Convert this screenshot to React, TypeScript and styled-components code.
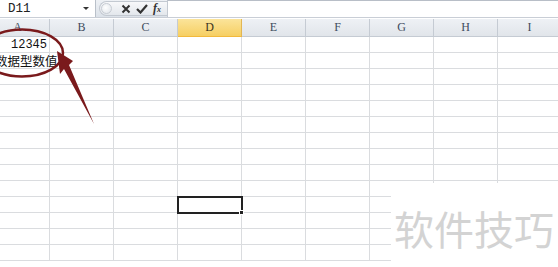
import React from "react";
import styled, { createGlobalStyle } from "styled-components";

const Global = createGlobalStyle`
  html, body { margin: 0; padding: 0; background: #ffffff; overflow: hidden; }
  body { width: 558px; height: 267px; font-family: "Liberation Sans", "Noto Sans CJK SC", sans-serif; }
`;

const Page = styled.div`
  position: relative;
  width: 558px;
  height: 267px;
  overflow: hidden;
  background: #fff;
  display: flex;
  flex-direction: column;
`;

const FormulaBar = styled.div`
  display: flex;
  height: 18px;
  background: #dfe4ea;
  border-bottom: 1px solid #c9ced6;
  box-sizing: border-box;
`;

const NameBox = styled.div`
  width: 96px;
  height: 17px;
  box-sizing: border-box;
  background: #fff;
  border-right: 1px solid #b9c0c9;
  display: flex;
  align-items: center;
  justify-content: space-between;
  padding: 0 4px 0 8px;
  font-family: "Liberation Mono", monospace;
  font-size: 12.5px;
  color: #222;
`;

const Caret = styled.span`
  width: 0;
  height: 0;
  border-left: 3px solid transparent;
  border-right: 3px solid transparent;
  border-top: 3px solid #333;
  margin-right: 2px;
`;

const ButtonArea = styled.div`
  width: 71px;
  display: flex;
  align-items: center;
  padding-left: 3px;
  box-sizing: border-box;
  background: linear-gradient(#eef1f5, #dce2e9);
`;

const Pill = styled.div`
  height: 15px;
  flex: 1;
  display: flex;
  align-items: center;
  gap: 5px;
  border: 1px solid #c3c9d1;
  border-right: none;
  border-radius: 8px 0 0 8px;
  background: linear-gradient(#f7f8fa, #e3e7ec);
  box-sizing: border-box;
  padding-left: 1px;
`;

const Knob = styled.span`
  width: 11px;
  height: 11px;
  border-radius: 50%;
  border: 1px solid #c7ccd3;
  background: radial-gradient(circle at 40% 40%, #ffffff, #dde2e8);
  box-sizing: border-box;
  margin-right: 4px;
`;

const Fx = styled.span`
  font-family: "Liberation Serif", serif;
  font-style: italic;
  font-weight: bold;
  font-size: 12px;
  color: #333;
  & > small { font-size: 8px; }
`;

const FormulaInput = styled.div`
  flex: 1;
  height: 17px;
  background: #fff;
  border-left: 1px solid #c3c9d1;
  border-top: 1px solid #b8bec7;
  box-sizing: border-box;
`;

const Sheet = styled.div`
  margin-left: -14px;
  margin-top: 1px;
  display: grid;
  grid-template-columns: repeat(9, 64px);
  grid-template-rows: 18px;
  grid-auto-rows: 16px;
`;

const ColHead = styled.div<{ $active?: boolean }>`
  box-sizing: border-box;
  border-right: 1px solid ${(p) => (p.$active ? "#e2b654" : "#c5cbd3")};
  border-bottom: 1px solid ${(p) => (p.$active ? "#f2b93c" : "#c5cbd3")};
  background: ${(p) =>
    p.$active ? "linear-gradient(#fbe49a, #f6cf63)" : "linear-gradient(#eef1f5, #e1e5ea)"};
  display: flex;
  align-items: center;
  justify-content: center;
  font-family: "Liberation Serif", serif;
  font-size: 12px;
  color: ${(p) => (p.$active ? "#3c3420" : "#3f4c5e")};
`;

const Cell = styled.div<{ $align?: "left" | "right"; $selected?: boolean }>`
  position: relative;
  box-sizing: border-box;
  border-right: 1px solid #dadcdf;
  border-bottom: 1px solid #dadcdf;
  display: flex;
  align-items: flex-end;
  justify-content: ${(p) => (p.$align === "right" ? "flex-end" : "flex-start")};
  padding: 0 2px 1px 3px;
  white-space: nowrap;
  overflow: visible;
  color: #111;
  ${(p) =>
    p.$selected &&
    `
    outline: 2px solid #222;
    outline-offset: -1px;
    z-index: 2;
  `}
`;

const Num = styled.span`
  font-family: "Liberation Mono", monospace;
  font-size: 12px;
  line-height: 11px;
`;

const CjkText = styled.span`
  font-family: "Noto Sans CJK SC", sans-serif;
  font-size: 12.5px;
  line-height: 13px;
  margin-left: 6px;
  position: relative;
  z-index: 1;
`;

const FillHandle = styled.span`
  position: absolute;
  right: -3px;
  bottom: -3px;
  width: 5px;
  height: 5px;
  background: #222;
  border: 1px solid #fff;
  box-sizing: border-box;
`;

const Annotation = styled.svg`
  position: absolute;
  left: 0;
  top: 0;
  pointer-events: none;
  z-index: 5;
`;

const Watermark = styled.div`
  position: absolute;
  left: 391px;
  top: 183px;
  width: 167px;
  height: 84px;
  background: #fff;
  display: flex;
  align-items: center;
  padding-left: 3px;
  padding-top: 6px;
  box-sizing: border-box;
  font-family: "Noto Sans CJK SC", sans-serif;
  font-size: 40px;
  color: #d3d3d3;
  z-index: 4;
`;

const cols = ["A", "B", "C", "D", "E", "F", "G", "H", "I"];
const ROWS = 14;

export default function App() {
  const rows: React.ReactNode[] = [];
  for (let r = 1; r <= ROWS; r++) {
    cols.forEach((c) => {
      const key = `${c}${r}`;
      if (key === "A1") {
        rows.push(
          <Cell key={key} $align="right">
            <Num>12345</Num>
          </Cell>
        );
      } else if (key === "A2") {
        rows.push(
          <Cell key={key}>
            <CjkText>数据型数值</CjkText>
          </Cell>
        );
      } else if (key === "D11") {
        rows.push(
          <Cell key={key} $selected>
            <FillHandle />
          </Cell>
        );
      } else {
        rows.push(<Cell key={key} />);
      }
    });
  }

  return (
    <Page>
      <Global />
      <FormulaBar>
        <NameBox>
          <span>D11</span>
          <Caret />
        </NameBox>
        <ButtonArea>
          <Pill>
            <Knob />
            <svg width="10" height="10" viewBox="0 0 10 10">
              <path d="M1.5 1.5 L8.5 8.5 M8.5 1.5 L1.5 8.5" stroke="#333" strokeWidth="2" />
            </svg>
            <svg width="12" height="10" viewBox="0 0 12 10">
              <path d="M1 5 L4.5 8.5 L11 1" stroke="#333" strokeWidth="2.2" fill="none" />
            </svg>
            <Fx>
              f<small>x</small>
            </Fx>
          </Pill>
        </ButtonArea>
        <FormulaInput />
      </FormulaBar>
      <Sheet>
        {cols.map((c) => (
          <ColHead key={c} $active={c === "D"}>
            {c}
          </ColHead>
        ))}
        {rows}
      </Sheet>
      <Annotation width="120" height="140" viewBox="0 0 120 140">
        <ellipse cx="22" cy="53" rx="41" ry="23.5" fill="none" stroke="#7a1a1c" strokeWidth="2.5" />
        <polygon points="57,51 73,61 69,65 94,124 64,69 60,74" fill="#7a1a1c" />
      </Annotation>
      <Watermark>软件技巧</Watermark>
    </Page>
  );
}
